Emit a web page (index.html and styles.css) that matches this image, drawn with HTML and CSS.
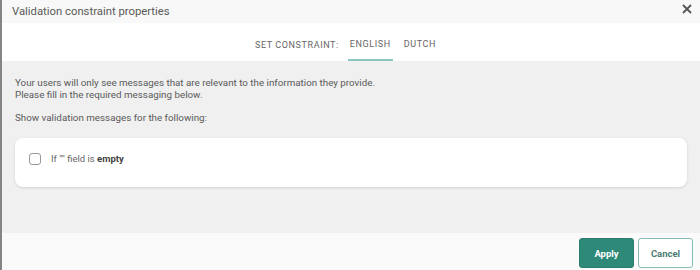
FILE: index.html
```html
<!DOCTYPE html>
<html>
<head>
<meta charset="utf-8">
<link rel="stylesheet" href="styles.css">
</head>
<body>
<div class="dialog">
  <div class="header">
    <span class="title">Validation constraint properties</span>
    <span class="close"><svg width="10" height="10" viewBox="0 0 10 10"><path d="M1 1L9 9M9 1L1 9" stroke="#555" stroke-width="1.8" fill="none"/></svg></span>
  </div>
  <div class="tabs">
    <span class="tab-label">SET CONSTRAINT:</span>
    <span class="tab active">ENGLISH</span>
    <span class="tab">DUTCH</span>
  </div>
  <div class="content">
    <p class="intro">Your users will only see messages that are relevant to the information they provide.<br>Please fill in the required messaging below.</p>
    <p class="sub">Show validation messages for the following:</p>
    <div class="card">
      <div class="row">
        <span class="checkbox"></span>
        <span class="rule">If "" field is <b>empty</b></span>
      </div>
    </div>
  </div>
  <div class="footer">
    <button class="btn apply">Apply</button>
    <button class="btn cancel">Cancel</button>
  </div>
</div>
</body>
</html>
```
FILE: styles.css
```css
html, body { margin: 0; padding: 0; }
body { font-family: Roboto, "Noto Sans", sans-serif; color: #555; width: 700px; height: 270px; overflow: hidden; }
.dialog { display: flex; flex-direction: column; height: 270px; border-left: 2px solid #858585; box-sizing: border-box; }
.header { height: 23px; background: #f8f8f8; display: flex; align-items: center; justify-content: space-between; padding: 0 8px 0 10px; box-sizing: border-box; }
.title { font-size: 11.3px; color: #5a5a5a; }
.close { display: flex; align-items: center; margin-top: -5px; }
.tabs { height: 38px; background: #fff; display: flex; justify-content: center; align-items: stretch; box-sizing: border-box; font-size: 9px; letter-spacing: 0.6px; color: #666; }
.tab-label, .tab { display: flex; align-items: center; padding-top: 6px; box-sizing: border-box; }
.tab-label { margin-right: 9px; }
.tab { padding-left: 2px; padding-right: 2px; margin-right: 9px; border-bottom: 2px solid transparent; }
.tab.active { border-bottom-color: #8cc7bf; }
.content { flex: 1; background: #f0f0f0; padding: 16px 13px 0 13px; box-sizing: border-box; font-size: 9.8px; color: #5a5a5a; }
.intro { margin: 0; line-height: 12px; }
.sub { margin: 11px 0 0 0; line-height: 12px; }
.card { margin-top: 14px; height: 49px; background: #fff; border-radius: 8px; box-shadow: 0 1px 3px rgba(0,0,0,0.12); padding: 14px 0 0 14px; width: 672px; box-sizing: border-box; }
.row { display: flex; align-items: center; height: 13px; }
.checkbox { width: 10px; height: 10px; border: 1.5px solid #9a9a9a; border-radius: 3px; margin-right: 10px; }
.rule { font-size: 9.5px; line-height: 13px; color: #666; }
.rule b { color: #444; font-weight: 700; }
.footer { height: 37px; background: #fafafa; display: flex; justify-content: flex-end; align-items: flex-start; padding: 5px 7px 0 0; box-sizing: border-box; gap: 4px; }
.btn { height: 30px; width: 55px; border-radius: 3px; font-family: Roboto, sans-serif; font-size: 9.5px; font-weight: 700; padding: 0; }
.apply { background: #2e8978; color: #fff; border: 1px solid #2a7d6d; }
.cancel { background: #fff; color: #4d7c75; border: 1px solid #86bcb3; }
```
